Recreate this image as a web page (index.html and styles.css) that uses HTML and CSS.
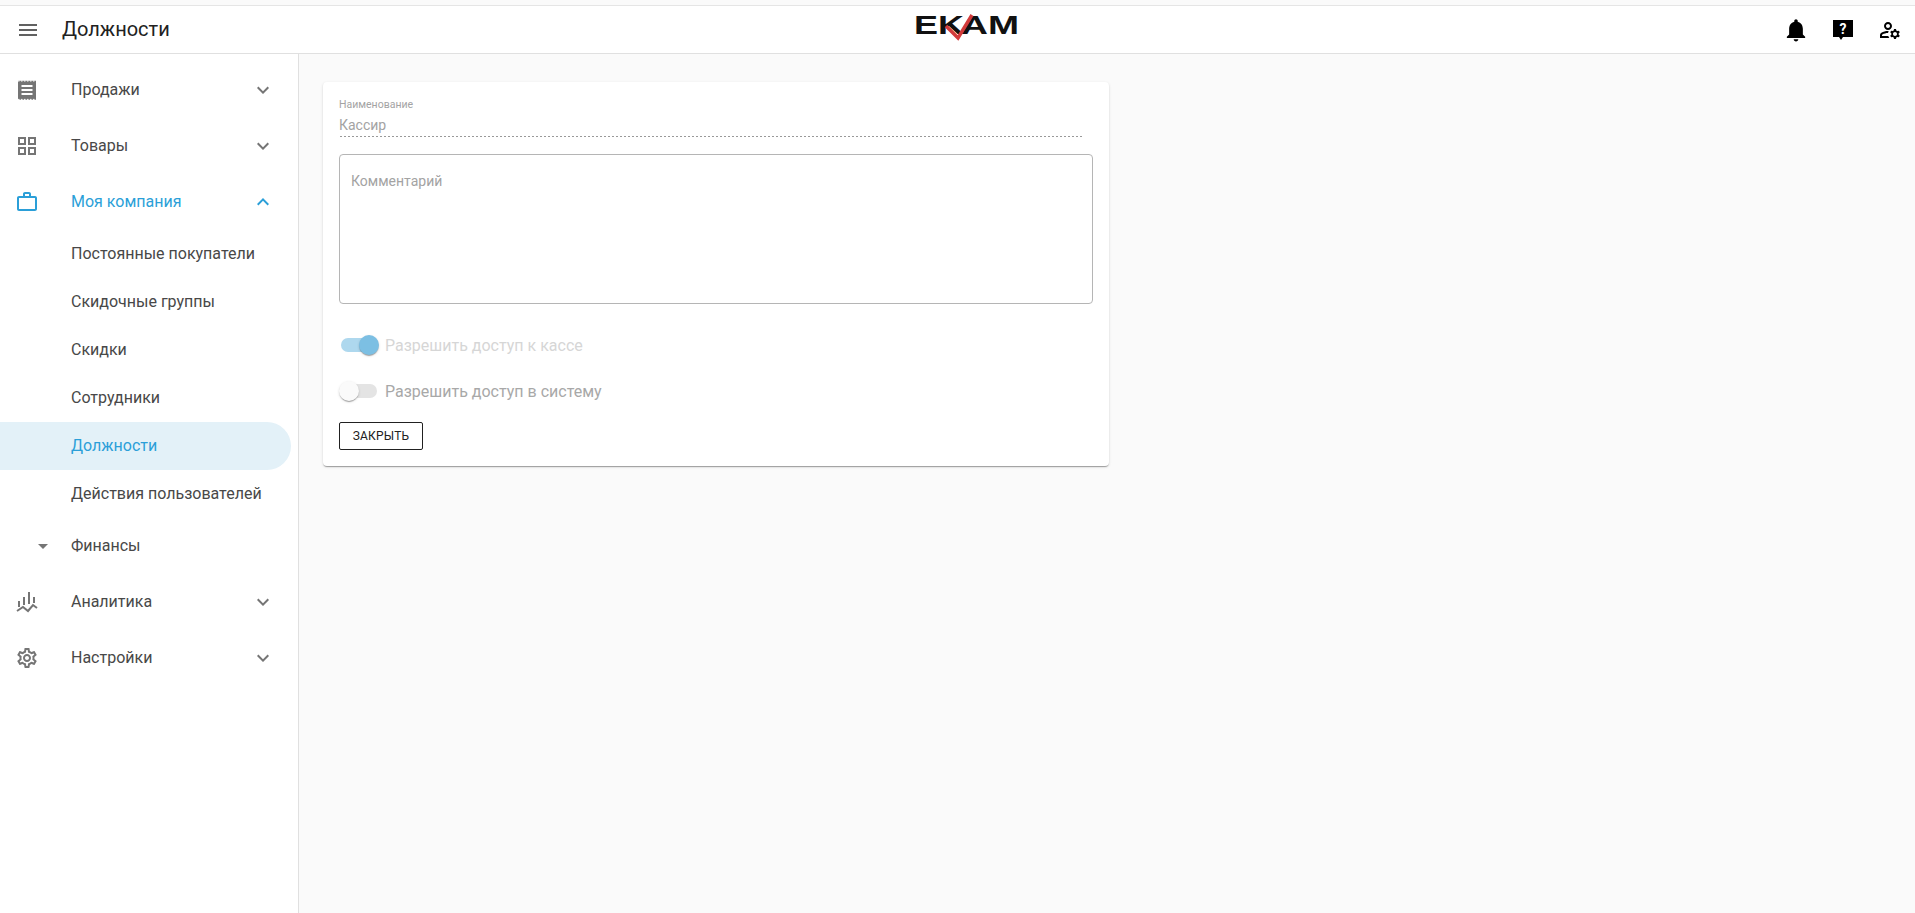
FILE: index.html
```html
<!DOCTYPE html>
<html>

<head>
    <title>Должности</title>
    <link rel="stylesheet" href="styles.css">
</head>

<body>
    <header class="topbar">
        <div class="topbar-left">
            <svg class="menu-icon" viewBox="0 0 24 24"><path d="M3 18h18v-2H3v2zm0-5h18v-2H3v2zm0-7v2h18V6H3z" /></svg>
            <span class="page-title">Должности</span>
        </div>

        <!-- логотип: буквы текстом, галочка отдельно -->
        <svg class="logo" viewBox="0 0 110 44" width="110" height="44">
            <text class="logo-text" x="4" y="26" textLength="50" lengthAdjust="spacingAndGlyphs">EK</text>
            <text class="logo-text" x="51" y="26" textLength="58" lengthAdjust="spacingAndGlyphs">AM</text>
            <path class="logo-check" d="M36 18l12 12L62 7" />
        </svg>

        <div class="topbar-right">
            <svg class="top-icon" viewBox="1.500 1.500 21 21"><path d="M12 22c1.100 0 2-.9 2-2h-4c0 1.100.9 2 2 2zm6-6v-5c0-3.070-1.630-5.640-4.500-6.320V4c0-.83-.67-1.500-1.500-1.500s-1.500.67-1.500 1.500v.68C7.640 5.360 6 7.920 6 11v5l-2 2v1h16v-1l-2-2z" /></svg>
            <svg class="top-icon" viewBox="0 0 24 24">
                <path d="M2 2h20v17H12l-2 3-2-3H2z" />
                <text class="help-mark" x="12" y="15.500">?</text>
            </svg>
            <svg class="top-icon" viewBox="0 0 24 24">
                <path d="M4 18v-.65c0-.34.16-.66.41-.81C6.100 15.530 8.030 15 10 15c.03 0 .05 0 .08.01.1-.7.3-1.370.59-1.980-.22-.02-.44-.03-.67-.03-2.420 0-4.680.67-6.610 1.820-.88.52-1.390 1.500-1.390 2.530V20h9.260c-.42-.6-.75-1.280-.97-2H4z" />
                <path d="M10 12c2.210 0 4-1.790 4-4s-1.790-4-4-4-4 1.790-4 4 1.790 4 4 4zm0-6c1.100 0 2 .9 2 2s-.9 2-2 2-2-.9-2-2 .9-2 2-2z" />
                <path d="M20.750 16c0-.22-.03-.42-.06-.63l1.140-1.010-1-1.730-1.450.49c-.32-.27-.68-.48-1.080-.63L18 11h-2l-.3 1.490c-.4.15-.76.36-1.080.63l-1.450-.49-1 1.730 1.140 1.010c-.03.21-.06.41-.06.63s.03.42.06.63l-1.140 1.010 1 1.730 1.450-.49c.32.27.68.48 1.080.63L16 21h2l.3-1.490c.4-.15.76-.36 1.080-.63l1.450.49 1-1.730-1.140-1.010c.03-.21.06-.41.06-.63zM17 18c-1.100 0-2-.9-2-2s.9-2 2-2 2 .9 2 2-.9 2-2 2z" />
            </svg>
        </div>
    </header>

    <div class="layout">
        <nav class="sidebar">
            <div class="nav-item">
                <svg class="nav-icon" viewBox="0 0 24 24"><path d="M3 2.700h18v19H3zM6.500 7v2h11V7zm0 4v2h11v-2zm0 4v2h11v-2z" fill-rule="evenodd" /><path class="perforation" d="M3 3h18M3 21.400h18" /></svg>
                <span class="nav-label">Продажи</span>
                <svg class="chevron" viewBox="0 0 24 24"><path d="M16.590 8.590L12 13.170 7.410 8.590 6 10l6 6 6-6z" /></svg>
            </div>
            <div class="nav-item">
                <svg class="nav-icon" viewBox="0 0 24 24"><path d="M3 3v8h8V3H3zm6 6H5V5h4v4zm-6 4v8h8v-8H3zm6 6H5v-4h4v4zm4-16v8h8V3h-8zm6 6h-4V5h4v4zm-6 4v8h8v-8h-8zm6 6h-4v-4h4v4z" /></svg>
                <span class="nav-label">Товары</span>
                <svg class="chevron" viewBox="0 0 24 24"><path d="M16.590 8.590L12 13.170 7.410 8.590 6 10l6 6 6-6z" /></svg>
            </div>
            <div class="nav-item active">
                <svg class="nav-icon" viewBox="0 0 24 24"><path d="M14 6V4h-4v2h4zM4 8v11h16V8H4zm16-2c1.110 0 2 .89 2 2v11c0 1.110-.89 2-2 2H4c-1.110 0-2-.89-2-2l.01-11c0-1.110.88-2 1.990-2h4V4c0-1.110.89-2 2-2h4c1.110 0 2 .89 2 2v2h4z" /></svg>
                <span class="nav-label">Моя компания</span>
                <svg class="chevron" viewBox="0 0 24 24"><path d="M12 8l-6 6 1.410 1.410L12 10.830l4.590 4.580L18 14z" /></svg>
            </div>

            <div class="sub-item">Постоянные покупатели</div>
            <div class="sub-item">Скидочные группы</div>
            <div class="sub-item">Скидки</div>
            <div class="sub-item">Сотрудники</div>
            <div class="sub-item selected">Должности</div>
            <div class="sub-item">Действия пользователей</div>

            <div class="nav-item">
                <svg class="caret" viewBox="0 0 24 24"><path d="M7 10l5 5 5-5z" /></svg>
                <span class="nav-label">Финансы</span>
            </div>

            <div class="nav-item">
                <svg class="nav-icon nav-icon-line" viewBox="0 0 24 24"><path d="M4 11v6M9 7v8M14 2v12M19 7v6M2 21l6-4 5 4 5-6 4 3" /></svg>
                <span class="nav-label">Аналитика</span>
                <svg class="chevron" viewBox="0 0 24 24"><path d="M16.590 8.590L12 13.170 7.410 8.590 6 10l6 6 6-6z" /></svg>
            </div>
            <div class="nav-item">
                <svg class="nav-icon" viewBox="0 0 24 24"><path d="M19.430 12.980c.04-.32.07-.64.07-.98 0-.34-.03-.66-.07-.98l2.110-1.650c.19-.15.24-.42.12-.64l-2-3.460c-.09-.16-.26-.25-.44-.25-.06 0-.12.01-.17.03l-2.490 1c-.52-.4-1.080-.73-1.690-.98l-.38-2.650C14.460 2.180 14.250 2 14 2h-4c-.25 0-.46.18-.49.42l-.38 2.650c-.61.25-1.170.59-1.690.98l-2.490-1c-.06-.02-.12-.03-.18-.03-.17 0-.34.09-.43.25l-2 3.460c-.13.22-.07.49.12.64l2.110 1.650c-.04.32-.07.65-.07.98 0 .33.03.66.07.98l-2.110 1.650c-.19.15-.24.42-.12.64l2 3.460c.09.16.26.25.44.25.06 0 .12-.01.17-.03l2.490-1c.52.4 1.080.73 1.690.98l.38 2.650c.03.24.24.42.49.42h4c.25 0 .46-.18.49-.42l.38-2.650c.61-.25 1.170-.59 1.690-.98l2.490 1c.06.02.12.03.18.03.17 0 .34-.09.43-.25l2-3.460c.12-.22.07-.49-.12-.64l-2.110-1.650zm-1.980-1.710c.04.31.05.52.05.73 0 .21-.02.43-.05.73l-.14 1.130.89.7 1.080.84-.7 1.210-1.270-.51-1.040-.42-.9.68c-.43.32-.84.56-1.250.73l-1.060.43-.16 1.130-.2 1.350h-1.400l-.19-1.350-.16-1.130-1.060-.43c-.43-.18-.83-.41-1.230-.71l-.91-.7-1.060.43-1.270.51-.7-1.210 1.080-.84.89-.7-.14-1.130c-.03-.31-.05-.54-.05-.74s.02-.43.05-.73l.14-1.130-.89-.7-1.080-.84.7-1.210 1.270.51 1.040.42.9-.68c.43-.32.84-.56 1.250-.73l1.060-.43.16-1.130.2-1.350h1.390l.19 1.350.16 1.130 1.060.43c.43.18.83.41 1.230.71l.91.7 1.060-.43 1.270-.51.7 1.210-1.070.85-.89.7.14 1.130zM12 8c-2.210 0-4 1.790-4 4s1.790 4 4 4 4-1.790 4-4-1.790-4-4-4zm0 6c-1.100 0-2-.9-2-2s.9-2 2-2 2 .9 2 2-.9 2-2 2z" /></svg>
                <span class="nav-label">Настройки</span>
                <svg class="chevron" viewBox="0 0 24 24"><path d="M16.590 8.590L12 13.170 7.410 8.590 6 10l6 6 6-6z" /></svg>
            </div>
        </nav>

        <main class="content">
            <div class="card">
                <div class="field">
                    <label class="field-label">Наименование</label>
                    <div class="field-value">Кассир</div>
                </div>

                <div class="comment">Комментарий</div>

                <div class="toggle-row toggle-row-first">
                    <span class="toggle on"><span class="knob"></span></span>
                    <span class="toggle-label light">Разрешить доступ к кассе</span>
                </div>
                <div class="toggle-row">
                    <span class="toggle"><span class="knob"></span></span>
                    <span class="toggle-label">Разрешить доступ в систему</span>
                </div>

                <button class="close-btn">Закрыть</button>
            </div>
        </main>
    </div>
</body>

</html>
```

FILE: styles.css
```css
* {
    box-sizing: border-box;
}

html,
body {
    height: 100%;
}

body {
    margin: 0;
    overflow: hidden;
    display: flex;
    flex-direction: column;
    font-family: Roboto, Arial, sans-serif;
    background-color: #fafafa;
    color: #484848;
}

/* верхняя панель */
.topbar {
    margin-top: 5px;
    height: 49px;
    flex: none;
    display: grid;
    grid-template-columns: 1fr auto 1fr;
    align-items: center;
    background-color: white;
    border-top: 1px solid #e5e5e5;
    border-bottom: 1px solid #e0e0e0;
}

.topbar-left {
    display: flex;
    align-items: center;
    padding-left: 16px;
}

.menu-icon {
    width: 24px;
    height: 24px;
    fill: #616161;
}

.page-title {
    margin-left: 22px;
    margin-bottom: 2px;
    font-size: 20px;
    color: #212121;
}

.logo {
    margin-left: 14px;
}

.logo-text {
    font-family: "Liberation Sans", Arial, sans-serif;
    font-size: 26px;
    font-weight: bold;
    fill: #111;
}

.logo-check {
    fill: none;
    stroke: #d23b3b;
    stroke-width: 3.500;
}

.topbar-right {
    display: flex;
    justify-content: flex-end;
    gap: 23px;
    padding-right: 13px;
}

.top-icon {
    width: 24px;
    height: 24px;
    fill: black;
}

.help-mark {
    font-family: Roboto, Arial, sans-serif;
    font-size: 14px;
    font-weight: bold;
    text-anchor: middle;
    fill: white;
}

/* боковое меню */
.layout {
    flex: 1;
    display: flex;
    min-height: 0;
}

.sidebar {
    width: 299px;
    flex: none;
    padding-top: 7.500px;
    background-color: white;
    border-right: 1px solid #e0e0e0;
    font-size: 16px;
}

.nav-item {
    height: 56px;
    display: flex;
    align-items: center;
    padding-left: 15px;
}

.nav-icon {
    width: 24px;
    height: 24px;
    fill: #757575;
    flex: none;
}

.nav-icon-line {
    fill: none;
    stroke: #757575;
    stroke-width: 2;
}

.perforation {
    fill: none;
    stroke: white;
    stroke-width: 1;
    stroke-dasharray: 1.500 1.500;
}

.nav-label {
    margin-left: 32px;
    flex: 1;
}

.chevron {
    width: 24px;
    height: 24px;
    margin-right: 23px;
    fill: #757575;
}

.caret {
    width: 24px;
    height: 24px;
    margin-left: 16px;
    margin-right: -16px;
    fill: #757575;
    flex: none;
}

.nav-item.active,
.nav-item.active .nav-label {
    color: #2b9fd8;
}

.active .nav-icon,
.active .chevron {
    fill: #2b9fd8;
}

.sub-item {
    height: 48px;
    width: 291px;
    display: flex;
    align-items: center;
    padding-left: 71px;
    border-radius: 0 24px 24px 0;
}

.sub-item.selected {
    background-color: #e3f1f8;
    color: #2b9fd8;
}

/* контент */
.content {
    flex: 1;
    padding: 28px 24px;
}

.card {
    width: 786px;
    padding: 16px;
    background-color: white;
    border-radius: 4px;
    box-shadow: 0 2px 1px -1px rgba(0, 0, 0, 0.2), 0 1px 1px 0 rgba(0, 0, 0, 0.14), 0 1px 3px 0 rgba(0, 0, 0, 0.12);
}

.field {
    width: 745px;
}

.field::after {
    content: "";
    display: block;
    height: 1px;
    margin-top: 1px;
    margin-left: 1px;
    background-image: repeating-linear-gradient(to right, #999 0 2px, transparent 2px 4px);
}

.field-label {
    display: block;
    font-size: 10.500px;
    line-height: 14px;
    color: #a3a3a3;
}

.field-value {
    margin-top: 3px;
    font-size: 14px;
    line-height: 20px;
    color: #a3a3a3;
}

.comment {
    width: 754px;
    height: 150px;
    margin-top: 17px;
    padding: 16px 11px;
    font-size: 14px;
    line-height: 20px;
    color: #a3a3a3;
    border: 1px solid #b5b5b5;
    border-radius: 4px;
}

.toggle-row {
    height: 46px;
    display: flex;
    align-items: center;
}

.toggle-row-first {
    margin-top: 18px;
}

.toggle {
    position: relative;
    width: 36px;
    height: 14px;
    margin-left: 2px;
    margin-right: 8px;
    border-radius: 7px;
    background-color: #e4e4e4;
}

.toggle.on {
    background-color: #aed8ee;
}

.knob {
    position: absolute;
    top: -3px;
    left: -2px;
    width: 20px;
    height: 20px;
    border-radius: 50%;
    background-color: #fafafa;
    box-shadow: 0 2px 1px -1px rgba(0, 0, 0, 0.2), 0 1px 1px 0 rgba(0, 0, 0, 0.14), 0 1px 3px 0 rgba(0, 0, 0, 0.12);
}

.toggle.on .knob {
    left: 18px;
    background-color: #7cbfe3;
}

.toggle-label {
    font-size: 16px;
    color: #a8a8a8;
}

.toggle-label.light {
    color: #d6d6d6;
}

.close-btn {
    display: block;
    width: 84px;
    height: 28px;
    margin-top: 8px;
    padding: 0;
    background-color: white;
    border: 1px solid #212121;
    border-radius: 2px;
    font-family: Roboto, Arial, sans-serif;
    font-size: 12px;
    letter-spacing: 0.2px;
    text-transform: uppercase;
    color: #212121;
}
```
